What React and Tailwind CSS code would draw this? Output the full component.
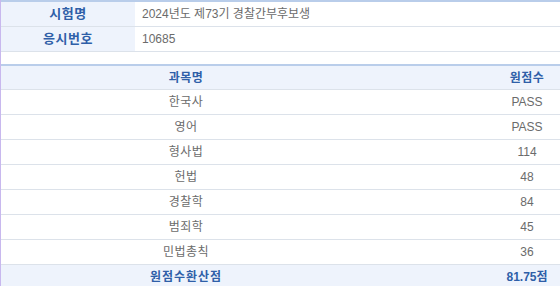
const info = [
  { label: '시험명', value: '2024년도 제73기 경찰간부후보생' },
  { label: '응시번호', value: '10685' },
];

const scores = [
  { name: '한국사', score: 'PASS' },
  { name: '영어', score: 'PASS' },
  { name: '형사법', score: '114' },
  { name: '헌법', score: '48' },
  { name: '경찰학', score: '84' },
  { name: '범죄학', score: '45' },
  { name: '민법총칙', score: '36' },
];

export default function App() {
  return (
    <div
      className="w-[560px] h-[286px] overflow-hidden bg-white border-l border-[#c8b8ee] text-[12px] text-[#6b6b6b]"
      style={{ fontFamily: '"Liberation Sans", "Noto Sans CJK KR", sans-serif' }}
    >
      {/* 응시 정보 */}
      <div className="border-t-2 border-[#b9cdea]">
        {info.map((row) => (
          <div key={row.label} className="flex h-[25px] border-b border-[#dce2ea]">
            <div className="w-[134px] bg-[#eef3fc] flex items-center justify-center font-bold text-[13px] tracking-[0.5px] text-[#2f5fa8]">
              {row.label}
            </div>
            <div className="flex-1 flex items-center pl-[7px]">{row.value}</div>
          </div>
        ))}
      </div>

      <div className="h-[12px]" />

      {/* 과목별 점수 */}
      <div className="border-t-2 border-[#b9cdea]">
        <div className="flex h-[24px] bg-[#eef3fc] border-b border-[#dce2ea] font-bold tracking-[0.5px] text-[#2f5fa8]">
          <div className="w-[370px] flex items-center justify-center">과목명</div>
          <div className="flex-1" />
          <div className="w-[66px] flex items-center justify-center">원점수</div>
        </div>
        {scores.map((row) => (
          <div key={row.name} className="flex h-[25px] border-b border-[#dce2ea]">
            <div className="w-[370px] flex items-center justify-center tracking-[0.5px]">{row.name}</div>
            <div className="flex-1" />
            <div className="w-[66px] flex items-center justify-center">{row.score}</div>
          </div>
        ))}
        <div className="flex h-[23px] bg-[#eef3fc] font-bold text-[#2f5fa8]">
          <div className="w-[370px] flex items-center justify-center tracking-[1px]">원점수환산점</div>
          <div className="flex-1" />
          <div className="w-[66px] flex items-center justify-center">81.75점</div>
        </div>
      </div>
    </div>
  );
}
